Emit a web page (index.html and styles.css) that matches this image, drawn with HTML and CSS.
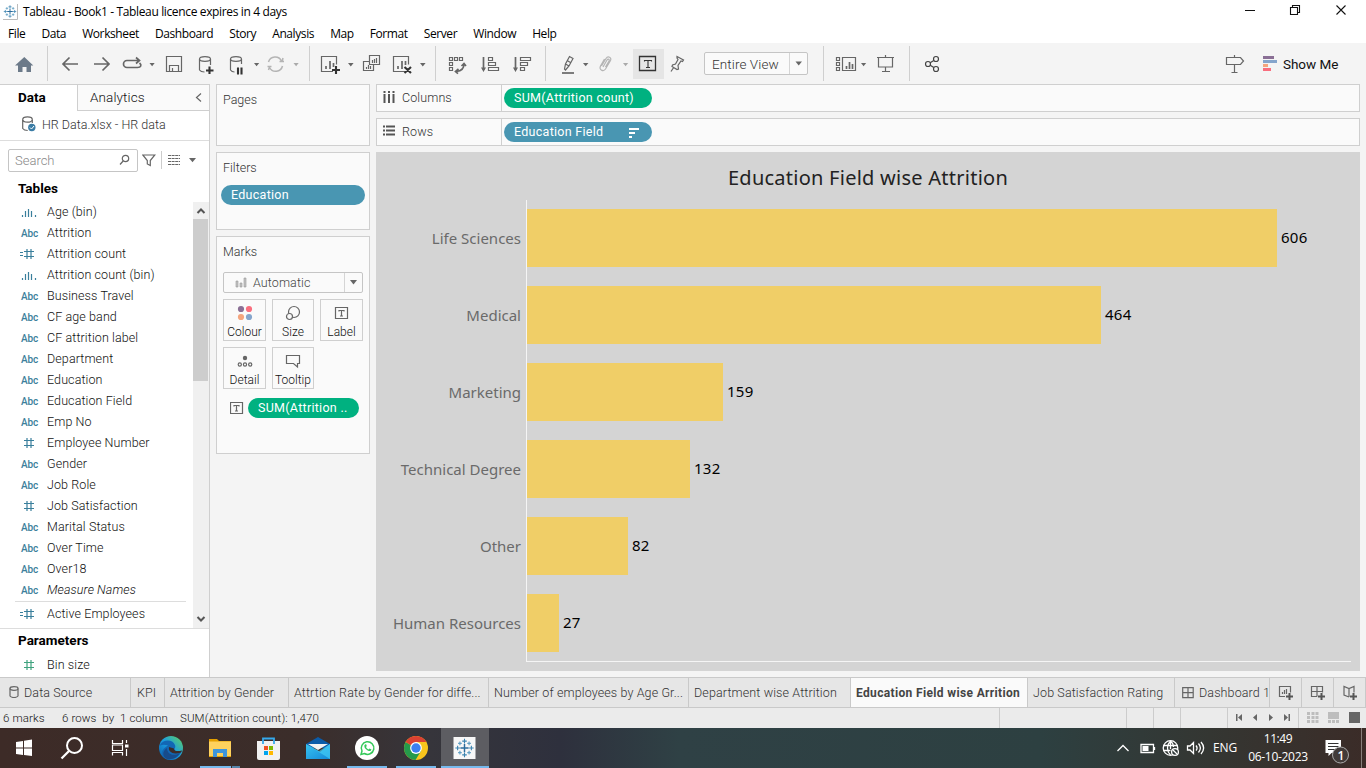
FILE: index.html
```html
<!DOCTYPE html>
<html lang="en">
<head>
<meta charset="utf-8">
<title>Tableau - Book1</title>
<link rel="stylesheet" href="styles.css">
</head>
<body>
<svg class="defs" width="0" height="0">
  <symbol id="abc" viewBox="0 0 24 20"><text x="5" y="14" class="abc">Abc</text></symbol>
  <symbol id="hash" viewBox="0 0 24 20"><path d="M8 7.500h10M8 12.500h10M11 5v10M15 5v10" class="hash"/></symbol>
  <symbol id="eqhash" viewBox="0 0 24 20"><path d="M8 7.500h10M8 12.500h10M11 5v10M15 5v10M4 8.500h3M4 11.500h3" class="hash"/></symbol>
  <symbol id="bin" viewBox="0 0 24 20"><path d="M6.500 13v2M9.500 9v6M12.500 7v8M15.500 9v6M19.500 13v2" class="hash"/></symbol>
  <symbol id="logo" viewBox="0 0 24 24">
    <path d="M12 7.500v9M7.500 12h9" stroke="#2b6c9c" stroke-width="1.600"/>
    <path d="M12 2v5M9.500 4.500h5M12 17v5M9.500 19.500h5M4.500 9.500v5M2 12h5M19.500 9.500v5M17 12h5" stroke="#3b83b0" stroke-width="1.200"/>
    <path d="M7 5v4M5 7h4M17 5v4M15 7h4M7 15v4M5 17h4M17 15v4M15 17h4" stroke="#62a0c4" stroke-width="1.300"/>
  </symbol>
</svg>
<div class="window">
<header class="titlebar">
  <svg class="applogo" width="15" height="16"><rect width="14" height="15" fill="#fff"/><path d="M14.500 0v15.500H0" fill="none" stroke="#bbb"/><use href="#logo" x="-.5" y="0" width="15" height="15"/></svg>
  <span class="wtitle">Tableau - Book1 - Tableau licence expires in 4 days</span>
  <svg class="winbtns" width="126" height="24" viewBox="1240 0 126 24" fill="none" stroke="#111" stroke-width="1.100"><path d="M1245 10.500h10M1336.500 5.500l9 9M1345.500 5.500l-9 9"/><path d="M1290.500 7.500h7v7h-7zM1292.500 7v-1.500h7v7h-2"/></svg>
</header>
<nav class="menu"><span>File</span><span>Data</span><span>Worksheet</span><span>Dashboard</span><span>Story</span><span>Analysis</span><span>Map</span><span>Format</span><span>Server</span><span>Window</span><span>Help</span></nav>
<div class="toolbar">
  <svg width="47" height="41" viewBox="0 43 47 41"><path d="M24.300 57l9 8.500h-2.300V72h-4.500v-5h-4v5H18v-6.500h-3z" fill="#6c7a89"/></svg>
  <i class="sep"></i>
  <svg width="261" height="41" viewBox="48 43 261 41">
    <g class="ic">
      <g stroke-width="1.700"><path class="arrow" d="M78 64H63M69.500 57.500L63 64l6.500 6.500M94 64h15M102.500 57.500L109 64l-6.500 6.500"/></g>
      <path class="mid" d="M134 67.500h-7a3.500 3.500 0 0 1 0-7h12M136 57.500l3.500 3-3.500 3M139.500 63c2.500 2 1.500 4.500-2 4.500h-4" />
      <path d="M166.500 56.500h15v15h-15zM169.500 71v-5.500h9v5.500M172.500 71v-3"/>
      <path d="M199.500 59v11c1 1.500 3 2 5 2M210.500 59v6M230.500 59v11c1 1.500 3 2 4 2M241.500 59v5"/><ellipse cx="205" cy="59" rx="5.500" ry="2.300"/><ellipse cx="236" cy="59" rx="5.500" ry="2.300"/>
      <path d="M209.500 66.500v7.500M206 70.500h7.500M238 67.500v7M241.500 67.500v7" stroke="#333" stroke-width="2" class="bold"/>
    </g>
    <g fill="none" stroke="#b4b4b4" stroke-width="1.500"><path d="M268.500 62a7 7 0 0 1 13-1M282.500 66a7 7 0 0 1-13 1.500M279.500 61.500h4.500M283 58l-1 4M267.500 66.500h4M268.500 70l1-3"/></g>
    <path d="M149.500 63h5.200l-2.600 3.200zM254 63h5.200l-2.600 3.200z" class="f"/><path d="M293.500 63h5.200l-2.600 3.200z" fill="#aaa"/>
  </svg>
  <i class="sep"></i>
  <svg width="125" height="41" viewBox="310 43 125 41">
    <g class="ic">
      <path d="M333 71.500h-11.500v-15h15v8M405 71.500h-11.500v-15h15v8"/>
      <path d="M326 69v-3M330 69v-8M333.500 67v-4M398 69v-3M402 69v-8M405.500 65v-4" stroke-width="1.800" class="mid"/>
      <path d="M336 66v8M332 70h8M404.500 67l6.500 6M411 67l-6.500 6" class="bold"/>
      <path d="M369.500 55.500h10v9h-10zM369 61.500h-5.500v9h10v-6M366.500 69v-2M368.500 69v-4M370.500 69v-3M372.500 63v-3M374.500 63v-4M376.500 63v-5"/>
    </g>
    <path d="M348 63h5.600l-2.800 3.400zM420 63h5.600l-2.800 3.400z" class="f"/>
  </svg>
  <i class="sep"></i>
  <svg width="109" height="41" viewBox="436 43 109 41">
    <g class="ic">
      <path d="M449.500 57.500h3v3h-3zM454.500 57.500h3v3h-3zM459.500 57.500h3v3h-3zM449.500 62.500h3v3h-3zM449.500 67.500h3v3h-3z"/>
      <path d="M464 64c0 5-3 7-7.500 7.500M461.500 66l2.500-2.500 2 2.500M458.500 69l-3 2.500 2.500 2.200" class="mid"/>
      <path d="M483.500 57v13M515.500 57v13" class="mid"/><path d="M481 67.500h5l-2.500 4.500zM513 67.500h5l-2.500 4.500z" fill="#666" stroke="none"/>
      <path d="M488.500 57.500h4v3h-4zM488.500 62.500h7v3h-7zM488.500 67.500h10v3h-10zM520.500 57.500h10v3h-10zM520.500 62.500h7v3h-7zM520.500 67.500h4v3h-4z"/>
    </g>
  </svg>
  <i class="sep"></i>
  <svg width="86" height="41" viewBox="546 43 86 41">
    <g class="ic"><path d="M564.500 69l1-5 4-7.500 3.500 2-4 7.500-3.500 4zM565.500 64l3.500 2M567 60.500l3.500 2"/><path d="M562 73h12" class="mid"/></g>
    <path d="M601.500 66l4.500-7.500c2-3 6-1 4.500 2l-5 8.500c-2 3-7 1-5-3l4-7M603 67l4-7c1-1.500 3-.5 2 1l-3.500 6" fill="none" stroke="#b4b4b4" stroke-width="1.200"/>
    <path d="M583 63h5.400l-2.700 3.300z" class="f"/><path d="M623 63h5.200l-2.600 3.200z" fill="#aaa"/>
  </svg>
  <span class="lblbtn"><svg width="31" height="30" viewBox="633 49 31 30"><path d="M639.500 56.500h16v14h-16z" fill="none" stroke="#333" stroke-width="1.300"/><path d="M644.500 61.500v-1h7v1M648 60.500v7M646 67.500h4" fill="none" stroke="#333" stroke-width="1.100"/></svg></span>
  <svg width="40" height="41" viewBox="664 43 40 41"><path class="ic" d="M677 56.500l6.500 3.500-1 1.500-1.500-.5-3 4.500.5 3.500-1.500.5-5-3 .5-1.500 3-1 2.500-4.500-1-1.500zM674 67l-3 4.500"/></svg>
  <div class="combo viewcombo"><span>Entire View</span><b><svg width="8" height="6"><path d="M.5.500h6.500L3.700 4.500z" class="f"/></svg></b></div>
  <i class="sep sep5"></i>
  <svg width="85" height="41" viewBox="824 43 85 41"><g class="ic"><path d="M836.500 57.500h3v3h-3zM836.500 62.500h3v3h-3zM836.500 67.500h3v3h-3zM842.500 57.500h13v13h-13z"/><path d="M846.500 69v-3M849.500 69v-7M852.500 69v-5" class="mid"/><path d="M877 57.500h17M878.500 58v9h14v-9M885.500 55v2M885.500 67v4.500M882 71.500h8"/></g><path d="M861 63h5.200l-2.600 3.200z" class="f"/></svg>
  <i class="sep"></i>
  <svg width="40" height="41" viewBox="910 43 40 41"><g class="ic share"><circle cx="928" cy="64" r="2.500"/><circle cx="936" cy="59" r="2.500"/><circle cx="936" cy="69" r="2.500"/><path d="M930.200 62.700l3.600-2.300M930.200 65.300l3.600 2.300"/></g></svg>
  <svg class="right" width="60" height="41" viewBox="1220 43 60 41"><path class="ic" d="M1226.500 57.500h14l3 3.500-3 3.500h-14zM1234.500 55v2M1234.500 65v7M1231.500 72.500h6"/><path d="M1263 56h11v3h-11z" fill="#8a6f95"/><path d="M1263 60h14v3h-14z" fill="#85a5cc"/><path d="M1263 64h5v3h-5z" fill="#f4a57e"/><path d="M1263 68h8v3h-8z" fill="#f96e7e"/></svg>
  <span class="showme">Show Me</span>
</div>
<main class="work">
  <aside class="side">
    <div class="tabs"><div class="tab on">Data</div><div class="tab off">Analytics<svg width="8" height="12"><path d="M6 1.500L1.500 5.500l4.500 4" class="ic"/></svg></div></div>
    <div class="source"><svg width="14" height="17"><g class="ic"><ellipse cx="5.500" cy="3.500" rx="4.800" ry="2.700"/><path d="M.7 4v8.500c1 1.500 3 2 5 2M10.300 4v3"/></g><circle cx="9.800" cy="11.500" r="3.700" fill="#3a7ca5"/><path d="M8 11.500l1.500 1.500 2.500-3" fill="none" stroke="#fff"/></svg><span>HR Data.xlsx - HR data</span></div>
    <div class="find">
      <div class="search"><span>Search</span><svg width="12" height="12"><g class="ic"><circle cx="6.500" cy="4.500" r="3.200"/><path d="M4.200 7L1 10.500"/></g></svg></div>
      <svg width="14" height="13" class="funnel"><path class="ic" d="M.8 1h12L8.300 6.500v5L5.300 10V6.500z"/></svg>
      <i></i>
      <svg width="30" height="12" class="listic"><path d="M0 1.500h12M0 4.500h12M0 7.500h12M0 10.500h12" stroke="#666" stroke-width="1.200" stroke-dasharray="3 .6"/><path d="M21 4h7l-3.500 4.200z" class="f"/></svg>
    </div>
    <h3>Tables</h3>
    <div class="listwrap">
      <ul>
        <li><svg><use href="#bin"/></svg>Age (bin)</li>
        <li><svg><use href="#abc"/></svg>Attrition</li>
        <li><svg><use href="#eqhash"/></svg>Attrition count</li>
        <li><svg><use href="#bin"/></svg>Attrition count (bin)</li>
        <li><svg><use href="#abc"/></svg>Business Travel</li>
        <li><svg><use href="#abc"/></svg>CF age band</li>
        <li><svg><use href="#abc"/></svg>CF attrition label</li>
        <li><svg><use href="#abc"/></svg>Department</li>
        <li><svg><use href="#abc"/></svg>Education</li>
        <li><svg><use href="#abc"/></svg>Education Field</li>
        <li><svg><use href="#abc"/></svg>Emp No</li>
        <li><svg><use href="#hash"/></svg>Employee Number</li>
        <li><svg><use href="#abc"/></svg>Gender</li>
        <li><svg><use href="#abc"/></svg>Job Role</li>
        <li><svg><use href="#hash"/></svg>Job Satisfaction</li>
        <li><svg><use href="#abc"/></svg>Marital Status</li>
        <li><svg><use href="#abc"/></svg>Over Time</li>
        <li><svg><use href="#abc"/></svg>Over18</li>
        <li class="it"><svg><use href="#abc"/></svg>Measure Names</li>
        <li class="last"><svg><use href="#eqhash"/></svg>Active Employees</li>
      </ul>
      <div class="scroll"><svg width="16" height="17"><path d="M4.500 11L8 7.500l3.500 3.500" fill="none" stroke="#555" stroke-width="2"/></svg><div class="thumb"></div><svg width="16" height="17"><path d="M4.500 6L8 9.500 11.500 6" fill="none" stroke="#555" stroke-width="2"/></svg></div>
    </div>
    <div class="params"><h3>Parameters</h3><div class="bin"><svg class="green"><use href="#hash"/></svg>Bin size</div></div>
  </aside>
  <section class="cards">
    <div class="card pages">Pages</div>
    <div class="card filters">Filters<div class="pill blue">Education</div></div>
    <div class="card marks">Marks
      <div class="combo mcombo"><svg width="12" height="11"><path d="M1 4h2v6H1zM5 6h2v4H5zM9 1h2v9H9z" fill="#c4c4c4" stroke="#999" stroke-width=".6"/></svg><span>Automatic</span><b><svg width="8" height="5"><path d="M0 0h7L3.500 4.500z" class="f"/></svg></b></div>
      <div class="mgrid">
        <div><svg width="16" height="16"><circle cx="4" cy="4" r="3.100" fill="#8a6f95"/><circle cx="12" cy="4" r="3.100" fill="#f96e7e"/><circle cx="4" cy="12" r="3.100" fill="#f4a57e"/><circle cx="12" cy="12" r="3.100" fill="#85a5cc"/></svg>Colour</div>
        <div><svg width="16" height="16"><g class="ic"><circle cx="9" cy="7" r="5.500"/><circle cx="4.500" cy="11.500" r="3" class="small"/></g></svg>Size</div>
        <div><svg width="16" height="16"><use href="#tbox" x="1" y="2"/></svg>Label</div>
        <div><svg width="16" height="16"><circle cx="8" cy="5" r="2.200" class="f"/><g class="ic"><circle cx="2.800" cy="11.500" r="1.600"/><circle cx="8" cy="11.500" r="1.600"/><circle cx="13.200" cy="11.500" r="1.600"/></g></svg>Detail</div>
        <div><svg width="16" height="16"><path class="ic" d="M1.500 2.500h13v8h-2v3.500l-4-3.500h-7z"/></svg>Tooltip</div>
      </div>
      <div class="mpill"><svg width="14" height="13"><g id="tbox"><path class="ic" d="M.5.5h12v11H.5z"/><path class="ic" d="M4 4.500v-1h5v1M6.500 3.500V9M5 9h3"/></g></svg><div class="pill green">SUM(Attrition ..</div></div>
    </div>
  </section>
  <section class="sheet">
    <div class="shelf"><div class="sl"><svg width="12" height="13"><path d="M1.500 0v2M6 0v2M10.500 0v2M1.500 3v9M6 3v9M10.500 3v9" stroke="#555" stroke-width="2"/></svg>Columns</div><div class="pill green">SUM(Attrition count)</div></div>
    <div class="shelf"><div class="sl"><svg width="12" height="13"><path d="M0 1.500h2M3 1.500h9M0 5.500h2M3 5.500h9M0 9.500h2M3 9.500h9" stroke="#555" stroke-width="1.800"/></svg>Rows</div><div class="pill blue">Education Field<svg width="11" height="10"><path d="M0 1h10M0 5h6M0 9h3" stroke="#fff" stroke-width="1.800"/></svg></div></div>
    <div class="viz">
      <h1>Education Field wise Attrition</h1>
      <div class="chart">
        <div class="row"><label>Life Sciences</label><div><i style="width:750px"></i><b>606</b></div></div>
        <div class="row"><label>Medical</label><div><i style="width:574px"></i><b>464</b></div></div>
        <div class="row"><label>Marketing</label><div><i style="width:196px"></i><b>159</b></div></div>
        <div class="row"><label>Technical Degree</label><div><i style="width:163px"></i><b>132</b></div></div>
        <div class="row"><label>Other</label><div><i style="width:101px"></i><b>82</b></div></div>
        <div class="row"><label>Human Resources</label><div><i style="width:32px"></i><b>27</b></div></div>
      </div>
    </div>
  </section>
</main>
<div class="sheets">
  <div class="s1"><svg width="10" height="12"><g class="ic"><ellipse cx="5" cy="2.500" rx="4" ry="1.800"/><path d="M1 2.500v7.500c1.500 2 6.500 2 8 0V2.500"/></g></svg>Data Source</div>
  <div class="s2">KPI</div><div class="s3">Attrition by Gender</div><div class="s4">Attrtion Rate by Gender for diffe...</div><div class="s5">Number of employees by Age Gr...</div><div class="s6">Department wise Attrition</div><div class="s7">Education Field wise Arrition</div><div class="s8">Job Satisfaction Rating</div>
  <div class="s9"><svg width="12" height="12"><path class="ic" d="M.7.7h10.500v10H.7zM6 1v10M1 5.700h10"/></svg>Dashboard 1</div>
  <div class="n"><svg width="17" height="16"><path class="ic" d="M7 11.500H1.500v-10h11v6M4.500 9V7M6.500 9V5M8.500 9V4"/><path d="M11.500 8v7M8 11.500h7" stroke="#555" stroke-width="2"/></svg></div>
  <div class="n"><svg width="17" height="16"><path class="ic" d="M7 11.500H1.500v-10h11v6M7 1.500v10M1.500 6.500h11"/><path d="M11.500 8v7M8 11.500h7" stroke="#555" stroke-width="2"/></svg></div>
  <div class="n"><svg width="17" height="16"><path class="ic" d="M7 12l-5-2V1.500l5 2 5-2v6M7 3.500V12"/><path d="M11.500 8v7M8 11.500h7" stroke="#555" stroke-width="2"/></svg></div>
</div>
<div class="status"><span class="t1">6 marks</span><span class="t2">6 rows&nbsp; by&nbsp; 1 column</span><span class="t3">SUM(Attrition count): 1,470</span>
  <svg width="367" height="20" viewBox="999 708 367 20"><path d="M999.500 708v20M1126.500 708v20M1153.500 708v20M1180.500 708v20M1227.500 708v20M1298.500 708v20" stroke="#ccc"/><path d="M1236 714h1.500v7h-1.500zM1242 714v7l-4-3.500zM1257 714v7l-4-3.500zM1269 714v7l4-3.500zM1284 714v7l4-3.500zM1288.500 714h1.500v7h-1.500zM1349 712h11v11h-11z" class="f"/><path d="M1307 712h3v3h-3zM1311.500 712h3v3h-3zM1315.500 712h3v3h-3zM1307 716h3v3h-3zM1311.500 716h3v3h-3zM1315.500 716h3v3h-3zM1307 720h3v3h-3zM1311.500 720h3v3h-3zM1315.500 720h3v3h-3zM1328 712h11v7h-11zM1328 720h3v3h-3zM1332 720h3v3h-3zM1336 720h3v3h-3z" fill="#bdbdbd"/></svg>
</div>
<footer class="task">
  <svg width="1110" height="40" viewBox="0 728 1110 40">
    <defs>
      <linearGradient id="edge" x1="0" y1="1" x2="1" y2="0"><stop offset="0" stop-color="#0c59a4"/><stop offset=".5" stop-color="#1b9de2"/><stop offset="1" stop-color="#61d45b"/></linearGradient>
      <linearGradient id="mail" x1="0" y1="0" x2="1" y2="1"><stop offset="0" stop-color="#38c3f0"/><stop offset="1" stop-color="#1489d8"/></linearGradient>
    </defs>
    <path d="M16 742l7-1v6.500h-7zM24 740.800l8-1.200v7.900h-8zM16 748.500h7v6.500l-7-1zM24 748.500h8v7.500l-8-1z" fill="#fff"/>
    <g fill="none" stroke="#fff"><circle cx="74.500" cy="745.500" r="7.500" stroke-width="2"/><path d="M69 751l-7.500 7.500" stroke-width="2.300"/><path d="M112.500 740v3.500h10V740M112.500 755.500v-3h10v3M112.500 745h10v5.500h-10zM126.500 740v3M126.500 749v7" stroke-width="1.200"/></g><path d="M125 744.500h3.500v3H125z" fill="#fff"/>
    <circle cx="171" cy="748" r="12" fill="url(#edge)"/><path d="M159.500 746c3-7 13-7 15.500-1 1 3-1 3.500-.5 5 1 3 5 2.500 7.500.5-2 6-8 9.500-14 9-6-1-8-7-4-11 2-2 4-3 4-3-5-2-8 0-8.500.5z" fill="#1267b4"/><path d="M167 748c0 6 6 9 13 5-3 5-8 7-13 6-5-2-5-8 0-11z" fill="#174b8b"/><path d="M169 747c-1 5 4 8 12 5.500l1-2c-4 1-8 1-8-2z" fill="#3b2c2a"/>
    <path d="M209 739h8l2 2h12v16h-22z" fill="#e5a000"/><path d="M209 741.500h22V756h-22z" fill="#ffd25e"/><path d="M213 757v-8h14v8h-4v-4h-6v4z" fill="#3f96dc"/>
    <path d="M257 741h23v17q0 2-2 2h-19q-2 0-2-2z" fill="#f1f1f1"/><path d="M263 744v-5.500h11v5.500" fill="none" stroke="#35a9ec" stroke-width="1.800"/><path d="M264 746h4v4h-4z" fill="#f25022"/><path d="M269 746h4v4h-4z" fill="#7fba00"/><path d="M264 751h4v4h-4z" fill="#00a4ef"/><path d="M269 751h4v4h-4z" fill="#ffb900"/>
    <path d="M306 744l12-7 12 7v4h-24z" fill="#0b5ba8"/><path d="M306 744l14 8 10-8v15h-24z" fill="url(#mail)"/><path d="M306 744l24 15v-15l-11 7z" fill="#45d0f6" opacity=".65"/><path d="M308 744h20l-10 6z" fill="#f2f2f2"/>
    <circle cx="367" cy="748" r="12" fill="#fff"/><path d="M361 754.500l1-3.500a6.300 6.300 0 1 1 2.400 2.500z" fill="none" stroke="#35c85a" stroke-width="1.500"/><path d="M364.500 745c-1 3 3 6.500 6 6l1-1.500-2-1-1 1c-1-.5-2-1.500-2.500-2.500l.8-1-.8-2z" fill="#35c85a"/>
    <circle cx="416" cy="748" r="12" fill="#f9c51c"/><path d="M416 748l-10.400-6A12 12 0 0 0 415.500 760l5.500-9z" fill="#259a4b"/><path d="M405.600 742a12 12 0 0 1 20.800 0H416v6z" fill="#db4132"/><circle cx="416" cy="748" r="5.900" fill="#fff"/><circle cx="416" cy="748" r="4.700" fill="#3c7ff0"/>
    <path d="M441 728h48v40h-48z" fill="#5d5d62"/><path d="M453.500 737h22v22h-22z" fill="#f7f7f7"/><use href="#logo" x="453.500" y="737" width="22" height="22"/>
    <path d="M200 766h31v2h-31zM347 766h40v2h-40zM396 766h40v2h-40zM441 766h48v2h-48z" fill="#76b9ed"/><path d="M232 766h8v2h-8z" fill="#5685aa"/>
  </svg>
  <svg width="102" height="40" viewBox="1110 728 102 40" fill="none" stroke="#fff" stroke-width="1.300"><path d="M1117.500 751l5.500-5.500 5.500 5.500"/><path d="M1141 744.500h12.500v8H1141zM1154.500 747v3"/><path d="M1142.500 746h6v5h-6z" fill="#fff" stroke="none"/><circle cx="1170.500" cy="748" r="7.300"/><path d="M1163.500 745.500h14M1163.500 750.500h7M1170.500 741c-4 4-4 10 0 14M1170.500 741c2.500 2 3 4 3 6M1170.500 741v8"/><circle cx="1175" cy="752" r="3.400" fill="#303a3a"/><path d="M1173 750l4 4"/><path d="M1187.500 746h2.500l3.500-3.500v11l-3.500-3.500h-2.500zM1196 745.500c1.500 2 1.500 3.500 0 5M1198.500 743.500c2.500 3 2.500 6 0 9M1201 742c3.500 4 3.500 8 0 12"/></svg>
  <span class="eng">ENG</span>
  <div class="clock"><span>11:49</span><span>06-10-2023</span></div>
  <svg class="note" width="48" height="40" viewBox="1318 728 48 40"><path d="M1325.500 740h15.500v13h-9.500l-3 3v-3h-3z" fill="#fff"/><path d="M1328 743.500h10.500M1328 746.500h10.500M1328 749.500h7" stroke="#333"/><circle cx="1340.500" cy="755" r="8" fill="#423b39" stroke="#aaa"/><text x="1337.500" y="759.500" class="one">1</text><path d="M1361.500 728v40" stroke="#877f7b"/></svg>
</footer>
</div>
</body>
</html>
```
FILE: styles.css
```css
* { box-sizing: border-box; }
body { margin: 0; background: #fff; overflow: hidden; font-family: Roboto, "Noto Sans", sans-serif; font-weight: 300; font-size: 12.5px; color: #111; }
.window { width: 1366px; height: 768px; display: flex; flex-direction: column; }
svg { display: block; flex: none; }
.defs { display: none; }
.ic { fill: none; stroke: #666; stroke-width: 1.2; }
.arrow, .mid { stroke-width: 1.7; }
.bold { stroke: #333; stroke-width: 2.1; }
.share { stroke: #444; }
.small { fill: #fafafa; }
.f { fill: #666; }
.hash { fill: none; stroke: currentColor; stroke-width: 1.2; }
.abc { font: 500 10px Roboto, sans-serif; fill: #3d7f9b; letter-spacing: -.1px; }
.titlebar { height: 24px; display: flex; align-items: center; padding-left: 3px; font-family: "Open Sans", "Noto Sans", sans-serif; font-size: 12px; font-weight: 400; color: #000; }
.wtitle { margin-left: 5px; letter-spacing: -.36px; margin-top: -1px; }
.winbtns { margin-left: auto; }
.menu { height: 19px; display: flex; gap: 16px; padding: 0 8px; line-height: 19px; font-family: "Open Sans", sans-serif; font-size: 12px; font-weight: 400; color: #000; letter-spacing: -.4px; white-space: nowrap; }
.toolbar { height: 41px; background: #f4f4f4; display: flex; align-items: center; flex: none; }
.sep { width: 1px; height: 35px; background: #cfcfcf; flex: none; }
.sep5 { margin-left: 15px; }
.lblbtn { width: 31px; height: 30px; background: #e5e5e5; margin-left: 1px; }
.combo { display: flex; align-items: center; background: #fafafa; border: 1px solid #c5c5c5; border-radius: 2px; }
.combo b { width: 18px; align-self: stretch; border-left: 1px solid #d5d5d5; display: flex; align-items: center; justify-content: center; margin-left: auto; }
.viewcombo { width: 104px; height: 23px; font-size: 13.5px; color: #333; padding-left: 7px; letter-spacing: .1px; }
.right { margin-left: auto; }
.showme { width: 83px; font-size: 13.5px; margin-left: 3px; font-weight: 400; letter-spacing: -.05px; }
.work { height: 593px; display: flex; background: #f4f4f4; flex: none; }
.side { width: 210px; border-right: 1px solid #cfcfcf; border-top: 1px solid #cfcfcf; background: #fff; display: flex; flex-direction: column; flex: none; }
.tabs { height: 26px; display: flex; font-size: 13.5px; line-height: 25px; }
.on { width: 77px; padding-left: 18px; font-weight: 700; color: #000; }
.off { flex: 1; border-left: 1px solid #cfcfcf; border-bottom: 1px solid #cfcfcf; background: #fafafa; padding: 0 6px 0 12px; display: flex; justify-content: space-between; align-items: center; letter-spacing: .1px; }
.source { height: 30px; border-bottom: 1px solid #ddd; display: flex; align-items: center; gap: 6px; padding: 0 0 2px 22px; color: #333; }
.find { height: 38px; display: flex; align-items: center; padding: 0 0 0 8px; }
.search { width: 130px; height: 23px; border: 1px solid #c5c5c5; border-radius: 2px; display: flex; align-items: center; justify-content: space-between; padding: 0 6px; color: #888; font-size: 13px; }
.funnel { margin-left: 4px; }
.find i { width: 1px; height: 18px; background: #ccc; margin: 0 6px 0 5px; }
h3 { margin: 0; padding-left: 18px; font-size: 13.5px; line-height: 18px; height: 23px; color: #000; }
.listwrap { display: flex; height: 426px; }
ul { list-style: none; margin: -1px 0 0; padding: 0; flex: 1; letter-spacing: .1px; }
li, .bin { height: 21px; display: flex; align-items: center; white-space: nowrap; }
li svg, .bin svg { width: 24px; height: 20px; margin: 1px 7px 0 16px; color: #3a7f9c; }
.bin .green { color: #3fa27e; }
.it { font-style: italic; }
.last { border-top: 1px solid #ddd; height: 23px; margin: 1px 7px 0 15px; }
.last svg { margin-left: 1px; }
.scroll { width: 16px; background: #f0f0f0; display: flex; flex-direction: column; }
.thumb { height: 162px; background: #cdcdcd; margin-right: 1px; margin-bottom: auto; }
.params { border-top: 1px solid #ddd; padding-top: 2px; flex: 1; }
.params .bin { letter-spacing: .1px; }
.cards { width: 154px; margin-left: 6px; display: flex; flex-direction: column; gap: 6px; flex: none; }
.card { border: 1px solid #cfcfcf; background: #fafafa; padding: 7px 6px; line-height: 16px; color: #333; font-size: 12.5px; }
.pages { height: 62px; }
.filters { height: 78px; }
.marks { height: 218px; }
.pill { height: 20px; border-radius: 10px; color: #fff; font-weight: 400; font-size: 12.5px; line-height: 19px; padding-left: 10px; display: flex; letter-spacing: .28px; }
.blue { background: #4996b2; }
.pill.green { background: #00b180; color: #fff; }
.filters .pill { margin: 9px -2px 0 -2px; }
.mcombo { width: 140px; height: 21px; margin-top: 12px; padding-left: 11px; gap: 6px; font-size: 12.5px; letter-spacing: .1px; color: #444; }
.mgrid { display: grid; grid-template-columns: 43px 42px 43px; gap: 6px; margin-top: 6px; }
.mgrid div { height: 42px; border: 1px solid #cfcfcf; display: flex; flex-direction: column; align-items: center; padding-top: 5px; gap: 3px; font-size: 12px; color: #111; }
.mpill { display: flex; align-items: center; margin: 9px 0 0 7px; gap: 4px; }
.mpill .pill { width: 111px; }
.sheet { margin-left: 6px; width: 984px; display: flex; flex-direction: column; gap: 6px; }
.shelf { height: 28px; border: 1px solid #cfcfcf; background: #fafafa; display: flex; align-items: center; gap: 2px; }
.sl { width: 125px; height: 26px; border-right: 1px solid #cfcfcf; display: flex; align-items: center; gap: 7px; padding: 0 0 1px 6px; font-size: 12.5px; letter-spacing: .1px; color: #333; }
.shelf .pill { width: 148px; }
.pill svg { margin: 6px 12px 0 auto; }
.viz { height: 519px; background: #d4d4d4; }
h1 { margin: 0; height: 48px; text-align: center; font: 400 20px/52px "Noto Sans", sans-serif; color: #222; letter-spacing: .25px; }
.chart { width: 825px; height: 462px; margin-left: 150px; border-left: 1px solid #f5f5f5; border-bottom: 1px solid #f5f5f5; padding-top: 9px; display: flex; flex-direction: column; gap: 19px; }
.row { height: 58px; display: flex; align-items: center; font-family: "Noto Sans", sans-serif; font-weight: 400; }
.row label { width: 150px; margin: -1px 6px 0 -156px; text-align: right; font-size: 15px; color: #6a6a6a; }
.row div { display: flex; align-items: center; gap: 4px; height: 58px; }
.row i { height: 58px; background: #f0ce67; }
.row b { font-weight: 400; font-size: 15px; color: #000; margin-top: -2px; letter-spacing: .25px; }
.sheets { height: 31px; background: #e6e6e6; border-top: 1px solid #c9c9c9; border-bottom: 1px solid #c9c9c9; display: flex; flex: none; font-size: 12.5px; letter-spacing: .12px; color: #333; }
.sheets div { border-right: 1px solid #c9c9c9; padding-left: 5px; line-height: 30px; white-space: nowrap; display: flex; align-items: center; flex: none; }
.sheets .s1 { width: 131px; padding-left: 9px; gap: 5px; }
.s1 svg { margin-top: -2px; }
.sheets .s2 { width: 34px; padding-left: 6px; }
.s3 { width: 124px; } .s4 { width: 200px; } .s5 { width: 200px; } .s6 { width: 162px; }
.sheets .s7 { width: 177px; background: #fafafa; color: #444; font-weight: 700; font-size: 12px; letter-spacing: .35px; }
.s8 { width: 147px; }
.sheets .s9 { width: 95px; padding-left: 7px; gap: 5px; }
.sheets .n { width: 32px; padding-left: 8px; }
.status { height: 20px; background: #ebebeb; display: flex; font-size: 11.5px; letter-spacing: .1px; line-height: 20px; flex: none; color: #111; }
.status .t1 { width: 62px; padding-left: 3px; }
.status .t2 { width: 118px; }
.status svg { margin-left: auto; }
.task { height: 40px; flex: none; display: flex; background: linear-gradient(90deg, #3d2b27 0, #3b2d2a 300px, #36353b 430px, #2e303d 560px, #2f4145 680px, #2d4041 1040px, #343632 1210px, #3b2c28 1366px); color: #fff; font: 12px "Open Sans", sans-serif; letter-spacing: -.4px; }
.eng { width: 24px; margin-left: 1px; line-height: 40px; letter-spacing: -.1px; }
.clock { width: 81px; display: flex; flex-direction: column; align-items: center; line-height: 18px; padding: 2px 0 0 1px; }
.clock span + span { letter-spacing: -.3px; }
.note { margin-left: auto; }
.one { fill: #fff; font: 600 12px "Open Sans", sans-serif; }
```
